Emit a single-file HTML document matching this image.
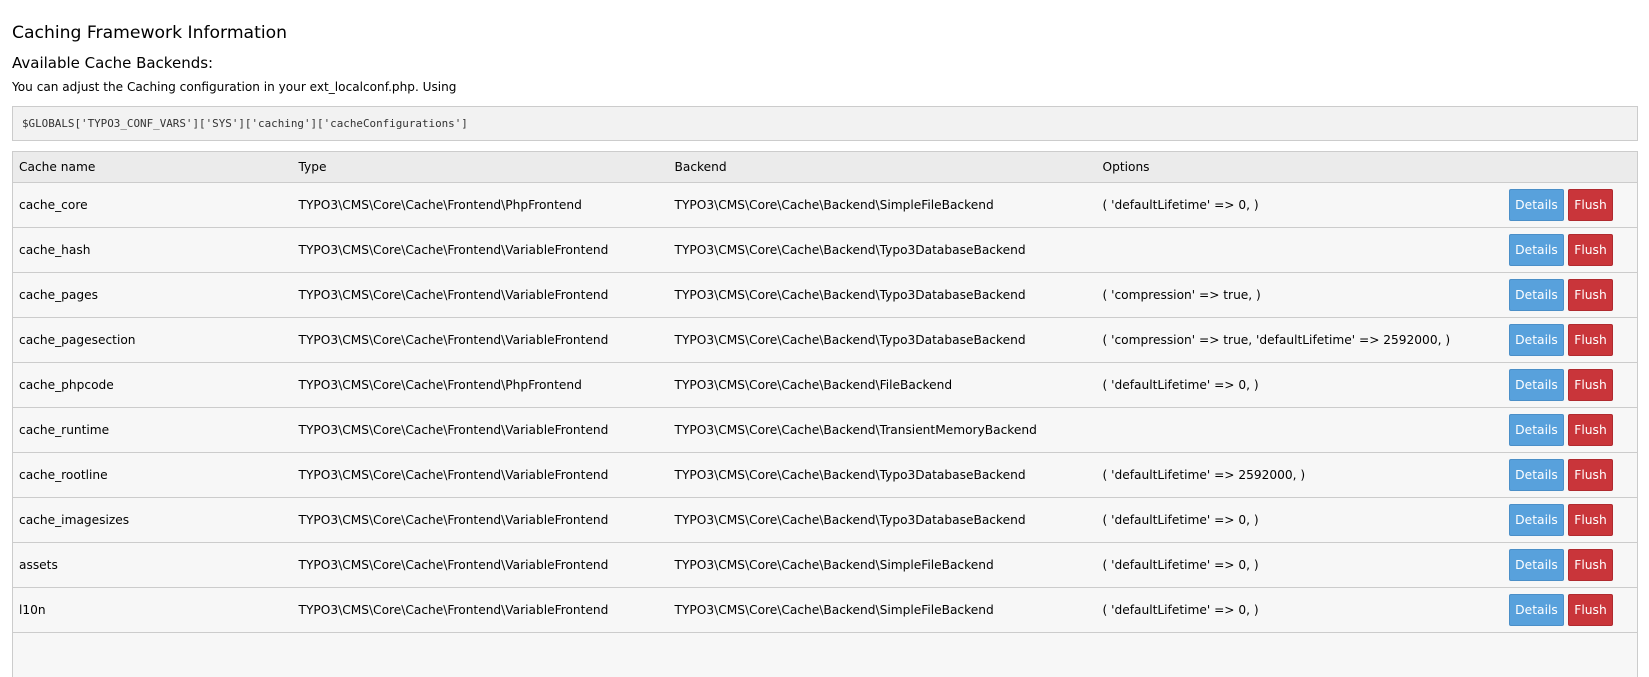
<!DOCTYPE html>
<html><head><meta charset="utf-8"><style>
body{margin:0;background:#fff;font-family:"DejaVu Sans","Liberation Sans",sans-serif;color:#000;width:1649px;height:637px;overflow:hidden}
h1{position:absolute;left:12px;top:23px;margin:0;font-size:17.2px;font-weight:normal}
h2{position:absolute;left:12px;top:54px;margin:0;font-size:15px;font-weight:normal}
p{position:absolute;left:12px;top:80px;margin:0;font-size:12.1px}
pre{position:absolute;left:12px;top:106px;height:33px;margin:0;background:#f2f2f2;border:1px solid #ccc;font-family:"DejaVu Sans Mono","Liberation Mono",monospace;font-size:10.9px;line-height:33px;padding:0 0 0 9px;width:1615px;color:#333}
table{position:absolute;left:12px;top:151px;width:1626px;border-collapse:collapse;table-layout:fixed;font-size:12.2px;border-left:1px solid #ccc;border-right:1px solid #ccc}
td,th{border-top:1px solid #ccc;padding:0 0 0 6px;text-align:left;font-weight:normal;white-space:nowrap;overflow:hidden}
th{background:#ebebeb;height:30px}
td{background:#f7f7f7;height:44px}
.b{text-align:right;padding-right:24px}
.btn{display:inline-block;height:30px;line-height:30px;color:#fff;border-radius:2px;font-size:12.3px;vertical-align:middle}
.d{background:#58a1dc;border:1px solid #4b8fc8;width:53px;text-align:center}
.f{background:#c9353a;border:1px solid #b02a2f;width:43px;text-align:center;margin-left:4px}
</style></head><body>
<h1>Caching Framework Information</h1>
<h2>Available Cache Backends:</h2>
<p>You can adjust the Caching configuration in your ext_localconf.php. Using</p>
<pre>$GLOBALS['TYPO3_CONF_VARS']['SYS']['caching']['cacheConfigurations']</pre>
<table>
<colgroup><col style="width:280px"><col style="width:376px"><col style="width:428px"><col style="width:380px"><col></colgroup>
<tr><th>Cache name</th><th>Type</th><th>Backend</th><th>Options</th><th></th></tr>
<tr><td>cache_core</td><td>TYPO3\CMS\Core\Cache\Frontend\PhpFrontend</td><td>TYPO3\CMS\Core\Cache\Backend\SimpleFileBackend</td><td>( 'defaultLifetime' =&gt; 0, )</td><td class="b"><span class="btn d">Details</span><span class="btn f">Flush</span></td></tr>
<tr><td>cache_hash</td><td>TYPO3\CMS\Core\Cache\Frontend\VariableFrontend</td><td>TYPO3\CMS\Core\Cache\Backend\Typo3DatabaseBackend</td><td></td><td class="b"><span class="btn d">Details</span><span class="btn f">Flush</span></td></tr>
<tr><td>cache_pages</td><td>TYPO3\CMS\Core\Cache\Frontend\VariableFrontend</td><td>TYPO3\CMS\Core\Cache\Backend\Typo3DatabaseBackend</td><td>( 'compression' =&gt; true, )</td><td class="b"><span class="btn d">Details</span><span class="btn f">Flush</span></td></tr>
<tr><td>cache_pagesection</td><td>TYPO3\CMS\Core\Cache\Frontend\VariableFrontend</td><td>TYPO3\CMS\Core\Cache\Backend\Typo3DatabaseBackend</td><td>( 'compression' =&gt; true, 'defaultLifetime' =&gt; 2592000, )</td><td class="b"><span class="btn d">Details</span><span class="btn f">Flush</span></td></tr>
<tr><td>cache_phpcode</td><td>TYPO3\CMS\Core\Cache\Frontend\PhpFrontend</td><td>TYPO3\CMS\Core\Cache\Backend\FileBackend</td><td>( 'defaultLifetime' =&gt; 0, )</td><td class="b"><span class="btn d">Details</span><span class="btn f">Flush</span></td></tr>
<tr><td>cache_runtime</td><td>TYPO3\CMS\Core\Cache\Frontend\VariableFrontend</td><td>TYPO3\CMS\Core\Cache\Backend\TransientMemoryBackend</td><td></td><td class="b"><span class="btn d">Details</span><span class="btn f">Flush</span></td></tr>
<tr><td>cache_rootline</td><td>TYPO3\CMS\Core\Cache\Frontend\VariableFrontend</td><td>TYPO3\CMS\Core\Cache\Backend\Typo3DatabaseBackend</td><td>( 'defaultLifetime' =&gt; 2592000, )</td><td class="b"><span class="btn d">Details</span><span class="btn f">Flush</span></td></tr>
<tr><td>cache_imagesizes</td><td>TYPO3\CMS\Core\Cache\Frontend\VariableFrontend</td><td>TYPO3\CMS\Core\Cache\Backend\Typo3DatabaseBackend</td><td>( 'defaultLifetime' =&gt; 0, )</td><td class="b"><span class="btn d">Details</span><span class="btn f">Flush</span></td></tr>
<tr><td>assets</td><td>TYPO3\CMS\Core\Cache\Frontend\VariableFrontend</td><td>TYPO3\CMS\Core\Cache\Backend\SimpleFileBackend</td><td>( 'defaultLifetime' =&gt; 0, )</td><td class="b"><span class="btn d">Details</span><span class="btn f">Flush</span></td></tr>
<tr><td>l10n</td><td>TYPO3\CMS\Core\Cache\Frontend\VariableFrontend</td><td>TYPO3\CMS\Core\Cache\Backend\SimpleFileBackend</td><td>( 'defaultLifetime' =&gt; 0, )</td><td class="b"><span class="btn d">Details</span><span class="btn f">Flush</span></td></tr>
<tr><td></td><td></td><td></td><td></td><td></td></tr>
</table>
</body></html>
